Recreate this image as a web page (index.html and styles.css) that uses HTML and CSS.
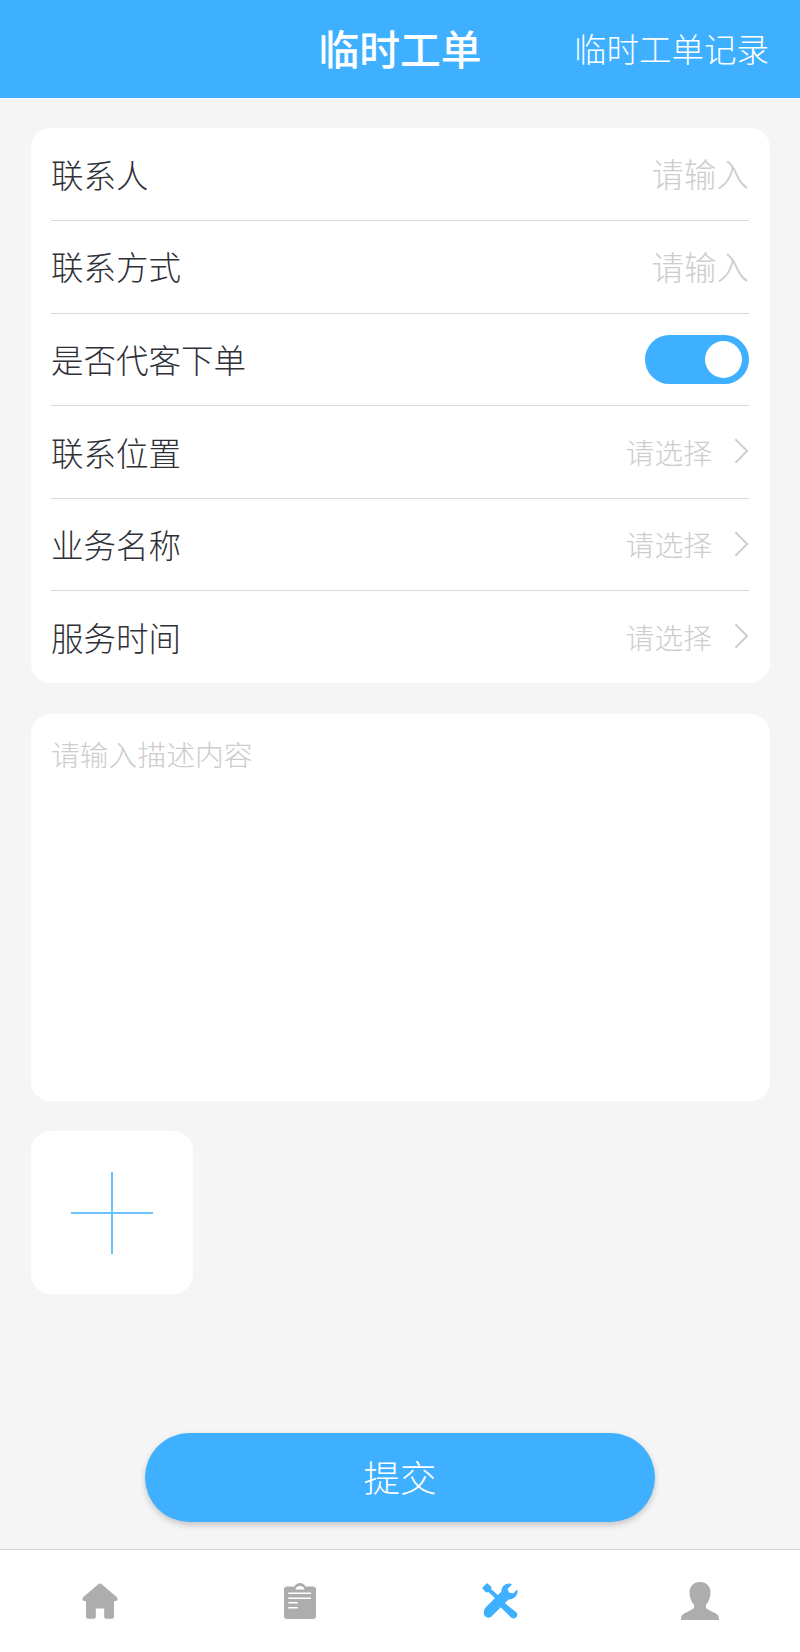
FILE: index.html
```html
<!DOCTYPE html>
<html lang="zh-CN">
<head>
    <meta charset="UTF-8">
    <meta name="viewport" content="width=device-width, initial-scale=1.0">
    <title>临时工单</title>
    <link rel="stylesheet" href="styles.css">
</head>
<body>

    <header class="top-bar">
        <h1>临时工单</h1>
        <a class="top-link">临时工单记录</a>
    </header>

    <main class="content">
        <section class="card form-card">
            <div class="form-row">
                <span class="row-label">联系人</span>
                <span class="row-hint">请输入</span>
            </div>
            <div class="form-row">
                <span class="row-label">联系方式</span>
                <span class="row-hint">请输入</span>
            </div>
            <div class="form-row">
                <span class="row-label">是否代客下单</span>
                <span class="switch"><span class="switch-knob"></span></span>
            </div>
            <div class="form-row">
                <span class="row-label">联系位置</span>
                <span class="row-pick">请选择
                    <svg class="chevron" viewBox="0 0 16 28"><path d="M1.5 1.5 14 14 1.5 26.5"/></svg>
                </span>
            </div>
            <div class="form-row">
                <span class="row-label">业务名称</span>
                <span class="row-pick">请选择
                    <svg class="chevron" viewBox="0 0 16 28"><path d="M1.5 1.5 14 14 1.5 26.5"/></svg>
                </span>
            </div>
            <div class="form-row">
                <span class="row-label">服务时间</span>
                <span class="row-pick">请选择
                    <svg class="chevron" viewBox="0 0 16 28"><path d="M1.5 1.5 14 14 1.5 26.5"/></svg>
                </span>
            </div>
        </section>

        <section class="card desc-card">请输入描述内容</section>

        <div class="card upload-box">
            <svg class="plus" viewBox="0 0 82 82"><path d="M41 0V82M0 41H82"/></svg>
        </div>

        <button class="submit-btn">提交</button>
    </main>

    <!-- Bottom tabs -->
    <nav class="tab-bar">
        <div class="tab">
            <svg class="tab-icon" viewBox="0 0 36 36"><path d="M18 0.5C18.8 0.5 19.5 0.9 20.1 1.4L34.8 14.2C36.3 15.5 35.7 18 33.5 18H32V33.5C32 34.9 31 35.8 29.7 35.8H24.2C22.9 35.8 22.2 34.9 22.2 33.5V25.5H13.8V33.5C13.8 34.9 13.1 35.8 11.8 35.8H6.3C5 35.8 4 34.9 4 33.5V18H2.5C0.3 18-0.3 15.5 1.2 14.2L15.9 1.4C16.5 0.9 17.2 0.5 18 0.5Z"/></svg>
        </div>
        <div class="tab">
            <svg class="tab-icon" viewBox="0 0 32 36"><path fill-rule="evenodd" d="M3 3.5H10.6C11.4 1.5 13.5 0 16 0S20.6 1.5 21.4 3.5H29C30.8 3.5 32 4.7 32 6.5V33C32 34.8 30.8 36 29 36H3C1.2 36 0 34.8 0 33V6.5C0 4.7 1.2 3.5 3 3.5ZM11.5 6.5H20.5C20.2 4.5 18.3 3 16 3S11.8 4.5 11.5 6.5ZM4.3 9.5V11H27V9.5ZM4.3 14.5V16H27V14.5ZM4.3 19V20.5H13.7V19ZM4.3 24V25.5H13.7V24Z"/></svg>
        </div>
        <div class="tab">
            <svg class="tab-icon tab-icon-active" viewBox="0 0 36 36">
                <path d="M4 24L19.5 8.5C19 4 23 0 28 0.5L30 1.5 25.5 6 27 9.5 31 10.5 35.5 6.5C36.5 12 32 17 26.5 16.5L10 33C8 35.5 4.5 35 3 33 1 31 1.5 27 4 24Z"/>
                <path d="M0 5L5 0 9.5 4 9 6 17 13 14 16 6.5 9 4 9.5Z"/>
                <path d="M20 18L34 29C36 31 35.5 33.5 34 34.5 32.5 36 30 35.5 28.5 34L16.5 22Z"/>
            </svg>
        </div>
        <div class="tab">
            <svg class="tab-icon tab-icon-user" viewBox="0 0 38 38"><path d="M19 0C25.5 0 29.5 4.5 29.5 10.5 29.5 15.5 27.5 20 25 23 24.5 25 25 26.5 27 27.5L34 31C36.5 32.3 38 34 38 36.5V38H0V36.5C0 34 1.5 32.3 4 31L11 27.5C13 26.5 13.5 25 13 23 10.5 20 8.5 15.5 8.5 10.5 8.5 4.5 12.5 0 19 0Z"/></svg>
        </div>
    </nav>

</body>
</html>
```

FILE: styles.css
```css
* {
    box-sizing: border-box;
}

body {
    font-family: "Noto Sans CJK SC", "Liberation Sans", sans-serif;
    background-color: #f5f5f5;
    margin: 0;
    padding: 0;
    height: 1652px;
    display: flex;
    flex-direction: column;
}

.top-bar {
    flex: none;
    height: 98px;
    padding: 0 30px 2px;
    background-color: #3eb0ff;
    color: #fff;
    display: grid;
    grid-template-columns: 1fr auto 1fr;
    align-items: center;
}

.top-bar h1 {
    grid-column: 2;
    margin: 0;
    font-size: 40.8px;
    font-weight: 500;
    line-height: 1;
}

.top-link {
    justify-self: end;
    margin-right: 1px;
    font-size: 32.5px;
    font-weight: 300;
    line-height: 1;
}

.content {
    flex: 1;
    padding: 30px 30.5px 27px;
    display: flex;
    flex-direction: column;
}

.card {
    background-color: #fff;
    border-radius: 20px;
}

.form-card {
    padding: 0.5px 20.5px 0;
}

.form-row {
    height: 92.6px;
    display: flex;
    align-items: center;
    justify-content: space-between;
    border-bottom: 1px solid #d9d9d9;
}

.form-row:last-child {
    height: 91.5px;
    border-bottom: none;
}

.row-label {
    padding-bottom: 2px;
    font-size: 32.5px;
    font-weight: 300;
    color: #2f2f38;
}

.row-hint {
    padding-bottom: 3px;
    font-size: 32.5px;
    font-weight: 300;
    color: #cdcdcd;
}

.row-pick {
    display: flex;
    align-items: center;
    gap: 22px;
    padding-bottom: 2px;
    font-size: 28.8px;
    font-weight: 300;
    color: #cdcdcd;
}

.chevron {
    width: 15px;
    height: 28px;
    fill: none;
    stroke: #cdcdcd;
    stroke-width: 2;
}

.switch {
    width: 104px;
    height: 49px;
    padding: 6px 7px;
    border-radius: 25px;
    background-color: #3eb0ff;
    display: flex;
    justify-content: flex-end;
}

.switch-knob {
    width: 37px;
    height: 37px;
    border-radius: 50%;
    background-color: #fff;
}

.desc-card {
    height: 387px;
    margin-top: 31px;
    padding: 20px 20.5px;
    font-size: 28.8px;
    font-weight: 300;
    line-height: 40px;
    color: #cdcdcd;
}

.upload-box {
    width: 162.5px;
    height: 163px;
    margin-top: 30px;
    padding-top: 1px;
    display: flex;
    align-items: center;
    justify-content: center;
}

.plus {
    width: 82px;
    height: 82px;
    fill: none;
    stroke: #6cc2ff;
    stroke-width: 2;
}

.submit-btn {
    width: 510px;
    height: 89px;
    margin: auto auto 0;
    padding: 0 0 2px;
    border: none;
    border-radius: 45px;
    background-color: #3eb0ff;
    box-shadow: 0 3px 6px rgba(0, 0, 0, 0.2);
    color: #fff;
    font-family: inherit;
    font-size: 36.5px;
    font-weight: 300;
}

.tab-bar {
    flex: none;
    height: 103px;
    background-color: #fff;
    border-top: 1px solid #d9d9d9;
    display: grid;
    grid-template-columns: repeat(4, 1fr);
}

.tab {
    display: flex;
    justify-content: center;
    padding-top: 33px;
}

.tab-icon {
    height: 36px;
    fill: #adadad;
}

.tab-icon-active {
    fill: #3eb0ff;
}

.tab-icon-user {
    height: 38px;
    margin-top: -1px;
}
```
